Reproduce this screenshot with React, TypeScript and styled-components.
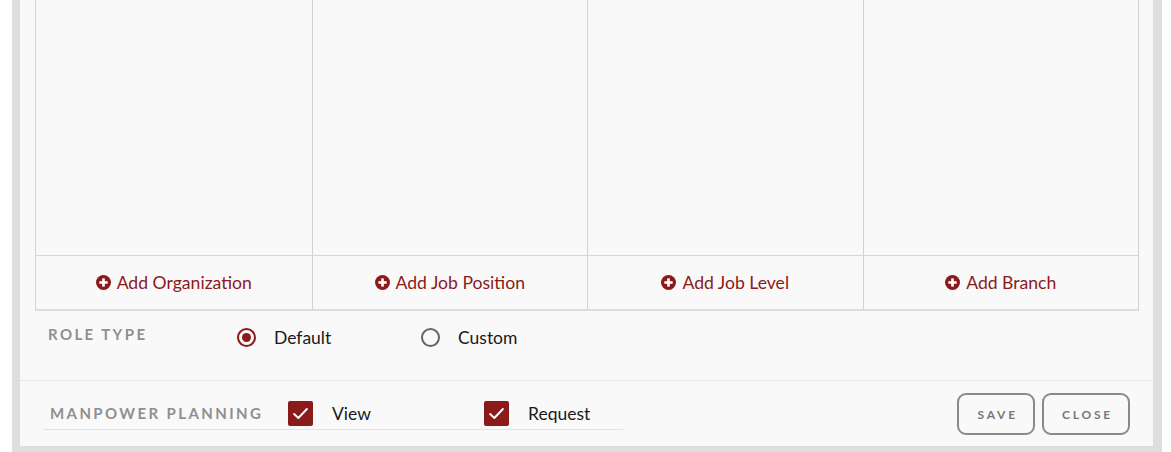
import React from 'react'
import styled, { createGlobalStyle } from 'styled-components'

const GlobalStyle = createGlobalStyle`
  html, body {
    margin: 0;
    padding: 0;
    background: #ffffff;
    font-family: Lato, "Open Sans", sans-serif;
  }
`

const RED = '#8b1a1a'

const columns = ['Add Organization', 'Add Job Position', 'Add Job Level', 'Add Branch']

const PlusIcon = () => (
  <svg width='15' height='15' viewBox='0 0 16 16'>
    <circle cx='8' cy='8' r='8' fill={RED} />
    <rect x='3.6' y='6.6' width='8.8' height='2.8' fill='#fff' />
    <rect x='6.6' y='3.6' width='2.8' height='8.8' fill='#fff' />
  </svg>
)

const CheckIcon = () => (
  <svg width='19' height='19' viewBox='0 0 16 16'>
    <path d='M2.6 8.4 L6.2 11.8 L13.4 4.2' stroke='#fff' strokeWidth='1.6' fill='none' strokeLinecap='round' strokeLinejoin='round' />
  </svg>
)

export default function App() {
  return (
    <>
      <GlobalStyle />
      <Frame>
        <Panel>
          <Table>
            <BodyRow>
              {columns.map(c => (
                <BodyCell key={c} />
              ))}
            </BodyRow>
            <FootRow>
              {columns.map(c => (
                <FootCell key={c}>
                  <AddLink>
                    <PlusIcon />
                    {c}
                  </AddLink>
                </FootCell>
              ))}
            </FootRow>
          </Table>

          <RoleRow>
            <Label>Role Type</Label>
            <RadioOption>
              <Radio checked />
              Default
            </RadioOption>
            <RadioOption>
              <Radio />
              Custom
            </RadioOption>
          </RoleRow>

          <BottomRow>
            <Group>
              <GroupLabel>Manpower Planning</GroupLabel>
              <CheckOption width={196}>
                <Checkbox>
                  <CheckIcon />
                </Checkbox>
                View
              </CheckOption>
              <CheckOption>
                <Checkbox>
                  <CheckIcon />
                </Checkbox>
                Request
              </CheckOption>
            </Group>
            <Actions>
              <Button>Save</Button>
              <Button>Close</Button>
            </Actions>
          </BottomRow>
        </Panel>
      </Frame>
    </>
  )
}

const Frame = styled.div`
  margin-left: 12px;
  width: 1150px;
  height: 452px;
  box-sizing: border-box;
  background: #dedede;
  padding: 0 9px 6px 8px;
  display: flex;
`

const Panel = styled.div`
  flex: 1;
  background: #f9f9f9;
  display: flex;
  flex-direction: column;
`

const Table = styled.div`
  margin: 0 14px 0 15px;
  border-left: 1px solid #d2d2d2;
  border-right: 1px solid #d2d2d2;
  border-bottom: 2px solid #dcdcdc;
`

const BodyRow = styled.div`
  display: grid;
  grid-template-columns: repeat(4, 1fr);
  height: 255px;
  border-bottom: 1px solid #d6d6d6;
`

const BodyCell = styled.div`
  & + & {
    border-left: 1px solid #d2d2d2;
  }
`

const FootRow = styled.div`
  display: grid;
  grid-template-columns: repeat(4, 1fr);
  height: 53px;
`

const FootCell = styled.div`
  display: flex;
  align-items: center;
  justify-content: center;
  & + & {
    border-left: 1px solid #d2d2d2;
  }
`

const AddLink = styled.span`
  display: flex;
  align-items: center;
  gap: 6px;
  color: ${RED};
  font-size: 17.6px;
  padding-bottom: 1px;
`

const RoleRow = styled.div`
  display: flex;
  align-items: center;
  height: 70px;
  padding: 0 0 16px 28px;
  box-sizing: border-box;
  border-bottom: 1px solid #e6e6e6;
`

const Label = styled.div`
  width: 189px;
  flex-shrink: 0;
  color: #8f8f8f;
  font-size: 15px;
  font-weight: 700;
  letter-spacing: 2.4px;
  text-transform: uppercase;
  white-space: nowrap;
  margin-top: -8px;
`

const RadioOption = styled.label`
  display: flex;
  align-items: center;
  gap: 18px;
  width: 184px;
  font-size: 17.5px;
  color: #1a1a1a;
`

const Radio = styled.span<{ checked?: boolean }>`
  width: 19px;
  height: 19px;
  box-sizing: border-box;
  border-radius: 50%;
  border: 2px solid ${p => (p.checked ? RED : '#666')};
  display: flex;
  align-items: center;
  justify-content: center;
  &::after {
    content: '';
    display: ${p => (p.checked ? 'block' : 'none')};
    width: 9px;
    height: 9px;
    border-radius: 50%;
    background: ${RED};
  }
`

const BottomRow = styled.div`
  flex: 1;
  display: flex;
  align-items: center;
  justify-content: space-between;
  padding: 0 23px;
`

const Group = styled.div`
  display: flex;
  align-items: center;
  width: 580px;
  height: 48px;
  box-sizing: border-box;
  padding: 16px 0 0 7px;
  border-bottom: 1px solid #e3e3e3;
  align-self: flex-start;
  margin-top: 1px;
`

const GroupLabel = styled(Label)`
  width: 238px;
  margin-top: -2px;
`

const CheckOption = styled.label<{ width?: number }>`
  display: flex;
  align-items: center;
  flex-shrink: 0;
  gap: 19px;
  width: ${p => (p.width ? `${p.width}px` : 'auto')};
  font-size: 17.5px;
  color: #1a1a1a;
`

const Checkbox = styled.span`
  width: 25px;
  height: 25px;
  border-radius: 2px;
  background: ${RED};
  display: flex;
  align-items: center;
  justify-content: center;
`

const Actions = styled.div`
  display: flex;
  gap: 7px;
  margin-top: 1px;
`

const Button = styled.button`
  height: 42px;
  padding: 0 15px 0 18px;
  border: 2px solid #8a8a8a;
  border-radius: 9px;
  background: transparent;
  color: #777;
  font-family: Lato, sans-serif;
  font-size: 12px;
  font-weight: 700;
  letter-spacing: 2.8px;
  text-transform: uppercase;
`
